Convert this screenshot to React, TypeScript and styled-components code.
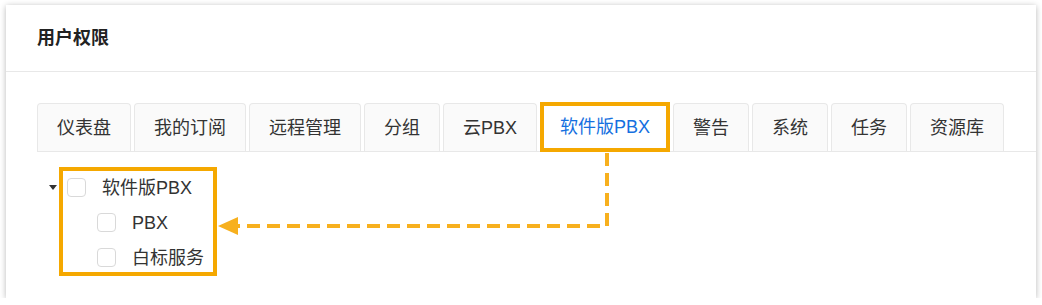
import styled, { createGlobalStyle } from "styled-components";

const GlobalStyle = createGlobalStyle`
  body {
    margin: 0;
    background: #ffffff;
    font-family: "Liberation Sans", "Noto Sans CJK SC", sans-serif;
    color: #333333;
  }
`;

const tabs = [
  "仪表盘",
  "我的订阅",
  "远程管理",
  "分组",
  "云PBX",
  "软件版PBX",
  "警告",
  "系统",
  "任务",
  "资源库",
];

const tree = [
  { label: "软件版PBX", level: 0, caret: true },
  { label: "PBX", level: 1, caret: false },
  { label: "白标服务", level: 1, caret: false },
];

function App() {
  const active = "软件版PBX";

  return (
    <>
      <GlobalStyle />
      <Card>
        <Header>
          <Title>用户权限</Title>
        </Header>
        <Body>
          <TabBar>
            {tabs.map((t) => (
              <Tab key={t} $active={t === active}>
                {t}
              </Tab>
            ))}
          </TabBar>
          <Tree>
            {tree.map((node) => (
              <TreeRow key={node.label} $level={node.level}>
                <CaretSlot>{node.caret && <Caret />}</CaretSlot>
                <Checkbox />
                <NodeLabel>{node.label}</NodeLabel>
              </TreeRow>
            ))}
            <HighlightFrame />
          </Tree>
        </Body>
        <Annotation viewBox="0 0 1030 293" width="1030" height="293">
          <path
            d="M601 148 V221 H232"
            fill="none"
            stroke="#f7b01e"
            strokeWidth="4"
            strokeDasharray="13 7"
          />
          <polygon points="212,221 232,212 232,230" fill="#f7b01e" />
        </Annotation>
      </Card>
    </>
  );
}

const Card = styled.div`
  position: relative;
  margin: 5px 0 0 6px;
  width: 1030px;
  height: 293px;
  background: #ffffff;
  box-shadow: 0 1px 6px rgba(0, 0, 0, 0.28);
`;

const Header = styled.div`
  height: 67px;
  box-sizing: border-box;
  padding: 0 31px;
  display: flex;
  align-items: center;
  border-bottom: 1px solid #e8e8e8;
`;

const Title = styled.h1`
  margin: 0;
  font-size: 18px;
  line-height: 1;
  font-weight: 700;
  color: #222222;
`;

const Body = styled.div`
  padding: 30px 0 0 31px;
`;

const TabBar = styled.div`
  display: flex;
  align-items: flex-end;
  gap: 3px;
  border-bottom: 1px solid #e8e8e8;
`;

const Tab = styled.div<{ $active?: boolean }>`
  height: ${(p) => (p.$active ? "50px" : "48px")};
  margin-bottom: ${(p) => (p.$active ? "-1px" : "0")};
  box-sizing: border-box;
  padding: 0 ${(p) => (p.$active ? "16px" : "19px")};
  display: flex;
  align-items: center;
  font-size: 18px;
  line-height: 1;
  white-space: nowrap;
  border: ${(p) => (p.$active ? "4px solid #f5a800" : "1px solid #e8e8e8")};
  border-bottom: ${(p) => (p.$active ? "4px solid #f5a800" : "none")};
  border-radius: ${(p) => (p.$active ? "0" : "4px 4px 0 0")};
  background: ${(p) => (p.$active ? "#ffffff" : "#fafafa")};
  color: ${(p) => (p.$active ? "#1570e0" : "#333333")};
`;

const Tree = styled.div`
  position: relative;
  margin-top: 18px;
`;

const TreeRow = styled.div<{ $level: number }>`
  height: 35px;
  display: flex;
  align-items: center;
  padding-left: ${(p) => p.$level * 30}px;
`;

const CaretSlot = styled.div`
  width: 30px;
  display: flex;
  padding-left: 12px;
  box-sizing: border-box;
`;

const Caret = styled.span`
  width: 0;
  height: 0;
  border-left: 4px solid transparent;
  border-right: 4px solid transparent;
  border-top: 5px solid #333333;
`;

const Checkbox = styled.span`
  width: 19px;
  height: 19px;
  box-sizing: border-box;
  border: 1px solid #d9d9d9;
  border-radius: 4px;
  background: #ffffff;
`;

const NodeLabel = styled.span`
  margin-left: 16px;
  font-size: 18px;
  line-height: 1;
  color: #333333;
`;

const HighlightFrame = styled.div`
  position: absolute;
  left: 22px;
  top: -3px;
  width: 158px;
  height: 109px;
  box-sizing: border-box;
  border: 4px solid #f5a800;
  pointer-events: none;
`;

const Annotation = styled.svg`
  position: absolute;
  left: 0;
  top: 0;
  pointer-events: none;
`;

export default App;
